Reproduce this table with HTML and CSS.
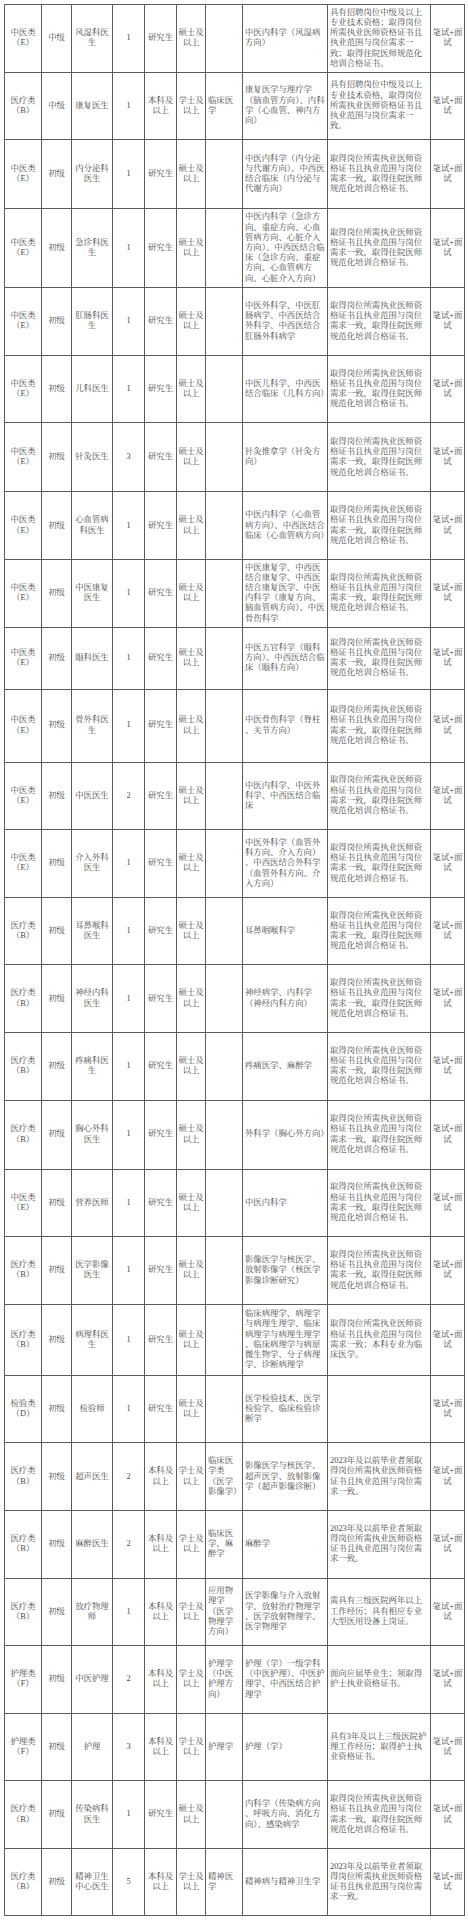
FILE: index.html
```html
<!DOCTYPE html>
<html lang="zh-CN">
<head>
<meta charset="utf-8">
<title>招聘岗位表</title>
<link rel="stylesheet" href="styles.css">
</head>
<body>
<table class="posts">
<colgroup>
<col class="c-type"><col class="c-level"><col class="c-name"><col class="c-num"><col class="c-edu"><col class="c-deg"><col class="c-ucat"><col class="c-major"><col class="c-req"><col class="c-exam">
</colgroup>
<tbody>
<tr><td>中医类（E）</td><td>中级</td><td>风湿科医生</td><td>1</td><td>研究生</td><td>硕士及以上</td><td class="l"></td><td class="l">中医内科学（风湿病方向）</td><td class="l">具有招聘岗位中级及以上专业技术资格；取得岗位所需执业医师资格证书且执业范围与岗位需求一致；取得住院医师规范化培训合格证书。</td><td>笔试+面试</td></tr>
<tr><td>医疗类（B）</td><td>中级</td><td>康复医生</td><td>1</td><td>本科及以上</td><td>学士及以上</td><td class="l">临床医学</td><td class="l">康复医学与理疗学（脑血管方向）、内科学（心血管、神内方向）</td><td class="l">具有招聘岗位中级及以上专业技术资格，取得岗位所需执业医师资格证书且执业范围与岗位需求一致。</td><td>笔试+面试</td></tr>
<tr class="h69"><td>中医类（E）</td><td>初级</td><td>内分泌科医生</td><td>1</td><td>研究生</td><td>硕士及以上</td><td class="l"></td><td class="l">中医内科学（内分泌与代谢方向）、中西医结合临床（内分泌与代谢方向）</td><td class="l">取得岗位所需执业医师资格证书且执业范围与岗位需求一致，取得住院医师规范化培训合格证书。</td><td>笔试+面试</td></tr>
<tr class="h79"><td>中医类（E）</td><td>初级</td><td>急诊科医生</td><td>1</td><td>研究生</td><td>硕士及以上</td><td class="l"></td><td class="l">中医内科学（急诊方向、重症方向、心血管病方向、心脏介入方向）、中西医结合临床（急诊方向、重症方向、心血管病方向、心脏介入方向）</td><td class="l">取得岗位所需执业医师资格证书且执业范围与岗位需求一致，取得住院医师规范化培训合格证书。</td><td>笔试+面试</td></tr>
<tr><td>中医类（E）</td><td>初级</td><td>肛肠科医生</td><td>1</td><td>研究生</td><td>硕士及以上</td><td class="l"></td><td class="l">中医外科学、中医肛肠病学、中西医结合外科学、中西医结合肛肠外科病学</td><td class="l">取得岗位所需执业医师资格证书且执业范围与岗位需求一致，取得住院医师规范化培训合格证书。</td><td>笔试+面试</td></tr>
<tr><td>中医类（E）</td><td>初级</td><td>儿科医生</td><td>1</td><td>研究生</td><td>硕士及以上</td><td class="l"></td><td class="l">中医儿科学、中西医结合临床（儿科方向）</td><td class="l">取得岗位所需执业医师资格证书且执业范围与岗位需求一致，取得住院医师规范化培训合格证书。</td><td>笔试+面试</td></tr>
<tr class="h69"><td>中医类（E）</td><td>初级</td><td>针灸医生</td><td>3</td><td>研究生</td><td>硕士及以上</td><td class="l"></td><td class="l">针灸推拿学（针灸方向）</td><td class="l">取得岗位所需执业医师资格证书且执业范围与岗位需求一致，取得住院医师规范化培训合格证书。</td><td>笔试+面试</td></tr>
<tr><td>中医类（E）</td><td>初级</td><td>心血管病科医生</td><td>1</td><td>研究生</td><td>硕士及以上</td><td class="l"></td><td class="l">中医内科学（心血管病方向）、中西医结合临床（心血管病方向）</td><td class="l">取得岗位所需执业医师资格证书且执业范围与岗位需求一致，取得住院医师规范化培训合格证书。</td><td>笔试+面试</td></tr>
<tr><td>中医类（E）</td><td>初级</td><td>中医康复医生</td><td>1</td><td>研究生</td><td>硕士及以上</td><td class="l"></td><td class="l">中医康复学、中西医结合康复学、中西医结合康复医学、中医内科学（康复方向、脑血管病方向）、中医骨伤科学</td><td class="l">取得岗位所需执业医师资格证书且执业范围与岗位需求一致，取得住院医师规范化培训合格证书。</td><td>笔试+面试</td></tr>
<tr class="h62"><td>中医类（E）</td><td>初级</td><td>眼科医生</td><td>1</td><td>研究生</td><td>硕士及以上</td><td class="l"></td><td class="l">中医五官科学（眼科方向）、中西医结合临床（眼科方向）</td><td class="l">取得岗位所需执业医师资格证书且执业范围与岗位需求一致，取得住院医师规范化培训合格证书。</td><td>笔试+面试</td></tr>
<tr class="h73"><td>中医类（E）</td><td>初级</td><td>骨外科医生</td><td>1</td><td>研究生</td><td>硕士及以上</td><td class="l"></td><td class="l">中医骨伤科学（脊柱<br>、关节方向）</td><td class="l">取得岗位所需执业医师资格证书且执业范围与岗位需求一致，取得住院医师规范化培训合格证书。</td><td>笔试+面试</td></tr>
<tr><td>中医类（E）</td><td>初级</td><td>中医医生</td><td>2</td><td>研究生</td><td>硕士及以上</td><td class="l"></td><td class="l">中医内科学、中医外科学、中西医结合临床</td><td class="l">取得岗位所需执业医师资格证书且执业范围与岗位需求一致，取得住院医师规范化培训合格证书。</td><td>笔试+面试</td></tr>
<tr><td>中医类（E）</td><td>初级</td><td>介入外科医生</td><td>1</td><td>研究生</td><td>硕士及以上</td><td class="l"></td><td class="l">中医外科学（血管外科方向、介入方向）<br>、中西医结合外科学（血管外科方向、介入方向）</td><td class="l">取得岗位所需执业医师资格证书且执业范围与岗位需求一致，取得住院医师规范化培训合格证书。</td><td>笔试+面试</td></tr>
<tr><td>医疗类（B）</td><td>初级</td><td>耳鼻喉科医生</td><td>1</td><td>研究生</td><td>硕士及以上</td><td class="l"></td><td class="l">耳鼻咽喉科学</td><td class="l">取得岗位所需执业医师资格证书且执业范围与岗位需求一致，取得住院医师规范化培训合格证书。</td><td>笔试+面试</td></tr>
<tr><td>医疗类（B）</td><td>初级</td><td>神经内科医生</td><td>1</td><td>研究生</td><td>硕士及以上</td><td class="l"></td><td class="l">神经病学、内科学（神经内科方向）</td><td class="l">取得岗位所需执业医师资格证书且执业范围与岗位需求一致，取得住院医师规范化培训合格证书。</td><td>笔试+面试</td></tr>
<tr><td>医疗类（B）</td><td>初级</td><td>疼痛科医生</td><td>1</td><td>研究生</td><td>硕士及以上</td><td class="l"></td><td class="l">疼痛医学、麻醉学</td><td class="l">取得岗位所需执业医师资格证书且执业范围与岗位需求一致，取得住院医师规范化培训合格证书。</td><td>笔试+面试</td></tr>
<tr class="h69"><td>医疗类（B）</td><td>初级</td><td>胸心外科医生</td><td>1</td><td>研究生</td><td>硕士及以上</td><td class="l"></td><td class="l">外科学（胸心外方向）</td><td class="l">取得岗位所需执业医师资格证书且执业范围与岗位需求一致，取得住院医师规范化培训合格证书。</td><td>笔试+面试</td></tr>
<tr><td>中医类（E）</td><td>初级</td><td>营养医师</td><td>1</td><td>研究生</td><td>硕士及以上</td><td class="l"></td><td class="l">中医内科学</td><td class="l">取得岗位所需执业医师资格证书且执业范围与岗位需求一致，取得住院医师规范化培训合格证书。</td><td>笔试+面试</td></tr>
<tr><td>医疗类（B）</td><td>初级</td><td>医学影像医生</td><td>1</td><td>研究生</td><td>硕士及以上</td><td class="l"></td><td class="l">影像医学与核医学、放射影像学（核医学影像诊断研究）</td><td class="l">取得岗位所需执业医师资格证书且执业范围与岗位需求一致，取得住院医师规范化培训合格证书。</td><td>笔试+面试</td></tr>
<tr class="h71"><td>医疗类（B）</td><td>初级</td><td>病理科医生</td><td>1</td><td>研究生</td><td>硕士及以上</td><td class="l"></td><td class="l">临床病理学、病理学与病理生理学、临床病理学与病理生理学<br>、临床病理学与病原微生物学、分子病理学、诊断病理学</td><td class="l">取得岗位所需执业医师资格证书且执业范围与岗位需求一致；本科专业为临床医学。</td><td>笔试+面试</td></tr>
<tr><td>检验类（D）</td><td>初级</td><td>检验师</td><td>1</td><td>研究生</td><td>硕士及以上</td><td class="l"></td><td class="l">医学检验技术、医学检验学、临床检验诊断学</td><td class="l"></td><td>笔试+面试</td></tr>
<tr><td>医疗类（B）</td><td>初级</td><td>超声医生</td><td>2</td><td>本科及以上</td><td>学士及以上</td><td class="l">临床医学类（医学影像学）</td><td class="l">影像医学与核医学、超声医学、放射影像学（超声影像诊断）</td><td class="l">2023年及以前毕业者须取得岗位所需执业医师资格证书且执业范围与岗位需求一致。</td><td>笔试+面试</td></tr>
<tr><td>医疗类（B）</td><td>初级</td><td>麻醉医生</td><td>2</td><td>本科及以上</td><td>学士及以上</td><td class="l">临床医学、麻醉学</td><td class="l">麻醉学</td><td class="l">2023年及以前毕业者须取得岗位所需执业医师资格证书且执业范围与岗位需求一致。</td><td>笔试+面试</td></tr>
<tr><td>医疗类（B）</td><td>初级</td><td>放疗物理师</td><td>1</td><td>本科及以上</td><td>学士及以上</td><td class="l">应用物理学（医学物理学方向）</td><td class="l">医学影像与介入放射学、放射治疗物理学<br>、医学放射物理学、医学物理学</td><td class="l">需具有三级医院两年以上工作经历；具有相应专业大型医用设备上岗证。</td><td>笔试+面试</td></tr>
<tr><td>护理类（F）</td><td>初级</td><td>中医护理</td><td>2</td><td>本科及以上</td><td>学士及以上</td><td class="l">护理学（中医护理方向）</td><td class="l">护理（学）一级学科（中医护理）、中医护理学、中西医结合护理学</td><td class="l">面向应届毕业生；须取得护士执业资格证书。</td><td>笔试+面试</td></tr>
<tr><td>护理类（F）</td><td>初级</td><td>护理</td><td>3</td><td>本科及以上</td><td>学士及以上</td><td class="l">护理学</td><td class="l">护理（学）</td><td class="l">具有3年及以上三级医院护理工作经历；取得护士执业资格证书。</td><td>笔试+面试</td></tr>
<tr><td>医疗类（B）</td><td>初级</td><td>传染病科医生</td><td>1</td><td>研究生</td><td>硕士及以上</td><td class="l"></td><td class="l">内科学（传染病方向<br>、呼吸方向、消化方向）、感染病学</td><td class="l">取得岗位所需执业医师资格证书且执业范围与岗位需求一致，取得住院医师规范化培训合格证书。</td><td>笔试+面试</td></tr>
<tr><td>医疗类（B）</td><td>初级</td><td>精神卫生中心医生</td><td>5</td><td>本科及以上</td><td>学士及以上</td><td class="l">精神医学</td><td class="l">精神病与精神卫生学</td><td class="l">2023年及以前毕业者须取得岗位所需执业医师资格证书且执业范围与岗位需求一致。</td><td>笔试+面试</td></tr>
</tbody>
</table>
</body>
</html>
```
FILE: styles.css
```css
html, body {
  margin: 0;
  padding: 0;
  background: #ffffff;
}

body {
  padding: 4px 0 0 4px;
  font-family: "Liberation Serif", "Noto Serif CJK SC", "Noto Sans CJK SC", serif;
  font-size: 8.4px;
  line-height: 10.2px;
  color: #4a4a4a;
}

.posts {
  border-collapse: collapse;
  table-layout: fixed;
  width: 460px;
}

.c-type { width: 37px; }
.c-level { width: 30px; }
.c-name { width: 41px; }
.c-num { width: 32px; }
.c-edu { width: 32px; }
.c-deg { width: 29px; }
.c-ucat { width: 37px; }
.c-major { width: 85px; }
.c-req { width: 103px; }
.c-exam { width: 34px; }

.posts tr {
  height: 67.6px;
}

.posts tr.h62 { height: 62px; }
.posts tr.h69 { height: 69px; }
.posts tr.h71 { height: 71px; }
.posts tr.h73 { height: 73px; }
.posts tr.h79 { height: 79px; }

.posts td {
  border: 1px solid #5c5c5c;
  padding: 0 1px;
  text-align: center;
  vertical-align: middle;
  word-break: break-all;
}

.posts td.l {
  text-align: left;
  padding: 0 2px;
}
```
